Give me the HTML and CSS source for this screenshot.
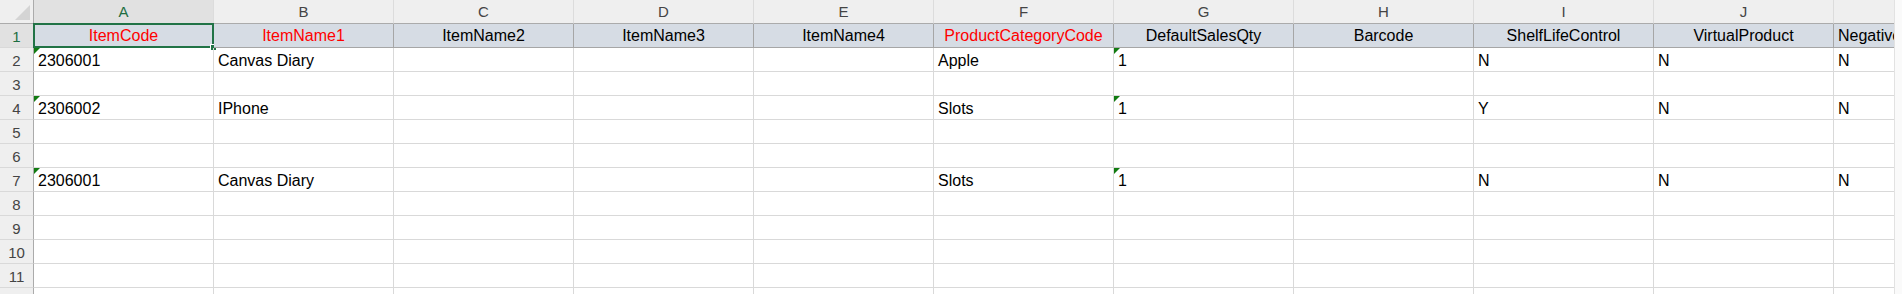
FILE: index.html
```html
<!DOCTYPE html>
<html lang="en">
<head>
    <meta charset="UTF-8">
    <title>Item Master - Sheet1</title>
    <link rel="stylesheet" href="styles.css">
</head>
<body>
    <div class="window">
        <div class="sheet" id="sheet"></div>
        <div class="vscroll"></div>
    </div>

    <script>
        const letters = ["A", "B", "C", "D", "E", "F", "G", "H", "I", "J", "K"];

        // row 1 of the template, red = required field
        const titles = [
            { text: "ItemCode", req: true },
            { text: "ItemName1", req: true },
            { text: "ItemName2" },
            { text: "ItemName3" },
            { text: "ItemName4" },
            { text: "ProductCategoryCode", req: true },
            { text: "DefaultSalesQty" },
            { text: "Barcode" },
            { text: "ShelfLifeControl" },
            { text: "VirtualProduct" },
            { text: "NegativeStock", left: true }
        ];

        const data = {
            2: ["2306001", "Canvas Diary", "", "", "", "Apple", "1", "", "N", "N", "N"],
            4: ["2306002", "IPhone", "", "", "", "Slots", "1", "", "Y", "N", "N"],
            7: ["2306001", "Canvas Diary", "", "", "", "Slots", "1", "", "N", "N", "N"]
        };

        // columns holding numbers stored as text (green corner mark)
        const textNumbers = [0, 6];

        const sheet = document.getElementById("sheet");

        function makeRow() {
            const row = document.createElement("div");
            row.classList.add("row");
            sheet.appendChild(row);
            return row;
        }

        function makeCell(row, classes, text) {
            const cell = document.createElement("div");
            cell.classList.add("cell", ...classes);
            if (text) cell.textContent = text;
            row.appendChild(cell);
            return cell;
        }

        // column letters
        const head = makeRow();
        makeCell(head, ["corner"]);
        letters.forEach((l, i) => {
            makeCell(head, i === 0 ? ["colhead", "active"] : ["colhead"], l);
        });

        // header row
        const first = makeRow();
        makeCell(first, ["rowhead", "active"], "1");
        titles.forEach((t, i) => {
            const classes = ["title"];
            if (t.req) classes.push("req");
            if (t.left) classes.push("left");
            const cell = makeCell(first, classes, t.text);
            if (i === 0) {
                const sel = document.createElement("div");
                sel.className = "selection";
                sel.innerHTML = '<span class="handle"></span>';
                cell.appendChild(sel);
            }
        });

        for (let r = 2; r <= 12; r++) {
            const row = makeRow();
            makeCell(row, ["rowhead"], String(r));
            const values = data[r] || [];
            letters.forEach((l, i) => {
                const classes = [];
                if (values[i] && textNumbers.includes(i)) classes.push("as-text");
                makeCell(row, classes, values[i]);
            });
        }
    </script>
</body>
</html>
```

FILE: styles.css
```css
body {
    margin: 0;
    font-family: "Liberation Sans", Arial, sans-serif;
    font-size: 16px;
    color: #000;
    background-color: #fff;
    overflow: hidden;
}

.window {
    display: flex;
    height: 294px;
    overflow: hidden;
}

.sheet {
    flex: none;
    width: 1894px;
    overflow: hidden;
}

.vscroll {
    flex: 1;
    background-color: #fafafa;
    border-left: 1px solid #e2e2e2;
}

.row {
    display: grid;
    grid-template-columns: 34px repeat(11, 180px);
    height: 24px;
}

.cell {
    position: relative;
    box-sizing: border-box;
    height: 24px;
    padding: 3px 4px 0;
    line-height: 20px;
    white-space: nowrap;
    border-right: 1px solid #d9d9d9;
    border-bottom: 1px solid #d9d9d9;
}

.corner {
    background-color: #efefef;
    border-right: 1px solid #ababab;
    border-bottom: 1px solid #ababab;
}

.corner::after {
    content: "";
    position: absolute;
    right: 3px;
    bottom: 3px;
    border-left: 15px solid transparent;
    border-bottom: 15px solid #d4d4d4;
}

.colhead {
    background-color: #efefef;
    color: #444;
    font-size: 15px;
    text-align: center;
    padding-top: 2px;
    border-right: 1px solid #dcdcdc;
    border-bottom: 1px solid #ababab;
}

.rowhead {
    background-color: #efefef;
    color: #444;
    font-size: 15px;
    text-align: center;
    padding: 3px 0 0;
    border-right: 1px solid #ababab;
}

.colhead.active,
.rowhead.active {
    background-color: #e1e1e1;
    color: #1e6e42;
}

.title {
    background-color: #d6dce4;
    text-align: center;
    padding-top: 2px;
    border-right: 1px solid #a6a6a6;
    border-bottom: 1px solid #a6a6a6;
}

.title.left {
    text-align: left;
}

.req {
    color: #ff0000;
}

.as-text::before {
    content: "";
    position: absolute;
    top: 0;
    left: 0;
    border-top: 6px solid #117b11;
    border-right: 6px solid transparent;
}

.selection {
    position: absolute;
    top: -1px;
    left: -1px;
    right: -1px;
    bottom: -1px;
    border: 2px solid #217346;
}

.handle {
    position: absolute;
    right: -5px;
    bottom: -5px;
    width: 5px;
    height: 5px;
    background-color: #217346;
    border: 1px solid #fff;
}
```
